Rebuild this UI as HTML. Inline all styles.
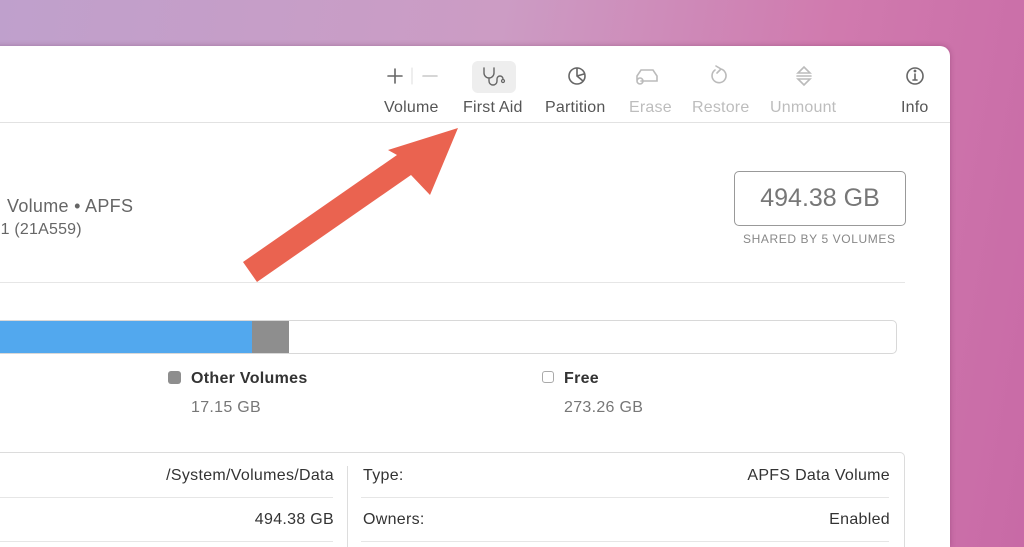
<!DOCTYPE html>
<html><head><style>
*{margin:0;padding:0;box-sizing:border-box}
html,body{width:1024px;height:547px;overflow:hidden}
body{position:relative;font-family:"Liberation Sans",sans-serif;
background:linear-gradient(100deg,#bfa0cc 0%,#cc9cc4 45%,#d07aae 75%,#c86aa6 100%)}
.win{position:absolute;left:-20px;top:46px;width:970px;height:501px;background:#fff;border-radius:10px 10px 0 0;box-shadow:0 0 6px rgba(80,20,60,.3)}
.t{position:absolute;white-space:nowrap}
.lbl{font-size:16px;color:#555;top:99px;letter-spacing:.2px}
.dis{color:#bdbdbd}
.hl{position:absolute;background:#e6e6e6;height:1px}
.tb{font-size:16px;color:#333;letter-spacing:.3px}
</style></head><body>
<div class="win"></div>
<div class="hl" style="left:0;top:122px;width:950px;background:#e2e2e2"></div>
<div style="position:absolute;left:472px;top:61px;width:44px;height:32px;background:#eeeeee;border-radius:6px"></div>
<svg width="1024" height="547" style="position:absolute;left:0;top:0">
<g stroke="#666" stroke-width="1.6" fill="none" stroke-linecap="round">
<path d="M388 76h14M395 69v14"/>
<path d="M412 68v16" stroke="#ddd" stroke-width="1"/>
<path d="M423 76h14" stroke="#c8c8c8"/>
<path d="M484 68v5a5 5 0 0 0 10 0v-5M489 78v3a4 4 0 0 0 8 0v-2a3 3 0 0 1 6 0" stroke-width="1.4"/>
<circle cx="503" cy="81" r="1.5" stroke-width="1.2"/>
<circle cx="577" cy="76" r="8"/><path d="M577 76v-8M577 76l6 5M577 76l7-2"/>
<g stroke="#bbb"><path d="M637 80v-4l4-6h12l4 6v5h-16"/><circle cx="640" cy="81" r="3"/>
<path d="M715 70a7 7 0 1 0 6-1M716 66l5 3-4 4"/>
<path d="M798 73l6-6 6 6zM798 79l6 6 6-6zM797 76h14"/></g>
<circle cx="915" cy="76" r="8"/><path d="M915 74v6M913 80h4"/><circle cx="915" cy="71" r=".6"/>
</g>
</svg>
<div class="t lbl" style="left:384px">Volume</div>
<div class="t lbl" style="left:463px">First Aid</div>
<div class="t lbl" style="left:545px">Partition</div>
<div class="t lbl dis" style="left:629px">Erase</div>
<div class="t lbl dis" style="left:692px">Restore</div>
<div class="t lbl dis" style="left:770px">Unmount</div>
<div class="t lbl" style="left:901px">Info</div>

<div class="t" style="left:7px;top:196px;font-size:18px;color:#666;letter-spacing:.3px">Volume • APFS</div>
<div class="t" style="left:-4px;top:221px;font-size:16px;color:#666;letter-spacing:.2px">.1 (21A559)</div>
<div style="position:absolute;left:734px;top:171px;width:172px;height:55px;border:1.3px solid #999;border-radius:5px;font-size:25px;color:#777;text-align:center;line-height:53px">494.38 GB</div>
<div class="t" style="left:743px;top:232px;font-size:12px;color:#888;letter-spacing:.6px">SHARED BY 5 VOLUMES</div>
<div class="hl" style="left:0;top:282px;width:905px"></div>

<div style="position:absolute;left:-10px;top:320px;width:907px;height:34px;border:1px solid #d8d8d8;border-radius:5px;overflow:hidden;background:#fff">
<div style="position:absolute;left:0;top:0;width:261px;height:34px;background:#52a8ee"></div>
<div style="position:absolute;left:261px;top:0;width:37px;height:34px;background:#8e8e8e"></div>
</div>
<div style="position:absolute;left:168px;top:371px;width:13px;height:13px;background:#8e8e8e;border-radius:3px"></div>
<div class="t" style="left:191px;top:370px;font-size:16px;font-weight:bold;color:#333;letter-spacing:.3px">Other Volumes</div>
<div class="t" style="left:191px;top:399px;font-size:16px;color:#777;letter-spacing:.3px">17.15 GB</div>
<div style="position:absolute;left:542px;top:371px;width:12px;height:12px;border:1px solid #aaa;border-radius:3px"></div>
<div class="t" style="left:564px;top:370px;font-size:16px;font-weight:bold;color:#333;letter-spacing:.3px">Free</div>
<div class="t" style="left:564px;top:399px;font-size:16px;color:#777;letter-spacing:.3px">273.26 GB</div>

<div style="position:absolute;left:-10px;top:452px;width:915px;height:95px;border:1px solid #dcdcdc;border-bottom:none;border-radius:5px 5px 0 0"></div>
<div style="position:absolute;left:347px;top:466px;width:1px;height:81px;background:#ddd"></div>
<div class="hl" style="left:0;top:497px;width:333px"></div>
<div class="hl" style="left:0;top:541px;width:333px"></div>
<div class="hl" style="left:361px;top:497px;width:528px"></div>
<div class="hl" style="left:361px;top:541px;width:528px"></div>
<div class="t tb" style="right:690px;top:467px">/System/Volumes/Data</div>
<div class="t tb" style="right:690px;top:511px">494.38 GB</div>
<div class="t tb" style="left:363px;top:467px">Type:</div>
<div class="t tb" style="left:363px;top:511px">Owners:</div>
<div class="t tb" style="right:134px;top:467px">APFS Data Volume</div>
<div class="t tb" style="right:134px;top:511px">Enabled</div>

<svg width="1024" height="547" style="position:absolute;left:0;top:0">
<polygon points="243,262 397,155 388,150 458,128 430,195 411,175 257,282" fill="#ea6350"/>
</svg>
</body></html>
